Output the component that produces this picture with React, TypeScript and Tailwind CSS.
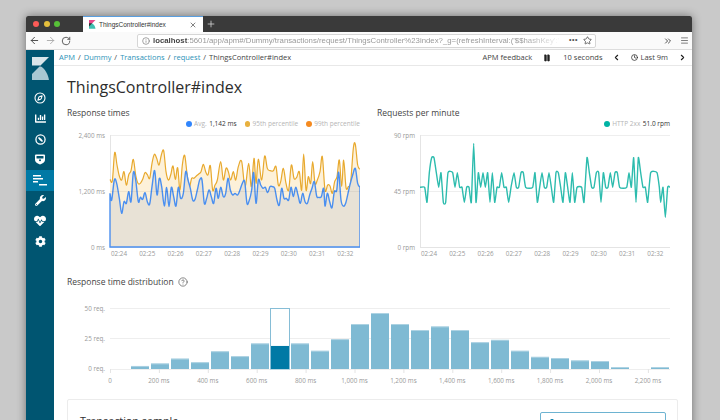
import {
  ArrowLeft,
  ArrowRight,
  ChevronLeft,
  ChevronRight,
  ChevronsRight,
  Clock,
  Compass,
  HelpCircle,
  Info,
  Menu,
  Pause,
  Plus,
  RotateCw,
  Star,
  X,
} from "lucide-react";
import { FaChartBar, FaCog, FaHeartbeat, FaWrench } from "react-icons/fa";

// chart points were read off the 3x zoom, so x 150..900 and y 105..441 is the plot
const p95: [number, number][] = [
  [150, 238], [157, 242], [164, 158], [171, 195], [178, 228], [185, 240], [192, 215], [199, 255], [206, 225],
  [213, 212], [220, 178], [227, 225], [234, 250], [241, 250], [248, 238], [255, 218], [262, 224], [269, 235],
  [276, 190], [283, 163], [290, 175], [297, 195], [304, 165], [311, 152], [318, 215], [325, 240], [332, 225],
  [339, 198], [346, 238], [353, 203], [360, 270], [367, 195], [374, 166], [381, 220], [388, 260], [395, 235],
  [402, 235], [409, 228], [416, 222], [423, 215], [430, 193], [437, 215], [444, 225], [451, 197], [458, 270],
  [465, 255], [472, 240], [482, 185], [490, 240], [498, 205], [505, 215], [512, 240], [520, 215], [527, 240],
  [535, 200], [545, 184], [555, 260], [566, 190], [574, 260], [582, 175], [588, 250], [595, 178], [605, 240],
  [614, 168], [622, 205], [630, 212], [640, 212], [648, 200], [655, 255], [662, 245], [670, 205], [678, 250],
  [686, 270], [694, 195], [702, 235], [710, 232], [718, 215], [725, 270], [731, 162], [738, 270], [745, 230],
  [752, 250], [758, 185], [765, 250], [772, 240], [780, 215], [787, 170], [795, 270], [803, 255], [810, 258],
  [817, 280], [824, 245], [831, 230], [838, 180], [845, 260], [851, 180], [858, 262], [865, 260], [872, 245],
  [880, 145], [886, 133], [893, 195], [900, 208],
];

const avg: [number, number][] = [
  [150, 280], [155, 300], [163, 240], [170, 250], [178, 295], [185, 340], [192, 305], [199, 310], [206, 275],
  [213, 305], [220, 218], [227, 240], [235, 305], [241, 292], [248, 298], [255, 278], [262, 305], [269, 312],
  [276, 260], [284, 212], [291, 285], [298, 235], [305, 260], [313, 318], [320, 262], [327, 320], [334, 262],
  [341, 290], [348, 318], [355, 262], [362, 295], [370, 280], [377, 215], [384, 240], [391, 265], [398, 300],
  [405, 298], [412, 270], [419, 240], [426, 240], [433, 310], [440, 295], [447, 270], [454, 290], [461, 310],
  [468, 265], [475, 295], [482, 262], [490, 290], [497, 280], [504, 235], [511, 270], [518, 285], [525, 280],
  [533, 285], [540, 270], [547, 250], [554, 245], [561, 310], [568, 300], [575, 270], [581, 218], [588, 310],
  [595, 240], [602, 255], [609, 265], [616, 262], [623, 278], [630, 260], [637, 260], [644, 265], [651, 300],
  [658, 315], [665, 265], [672, 295], [679, 295], [686, 300], [693, 262], [700, 290], [707, 262], [714, 285],
  [721, 310], [728, 280], [735, 305], [742, 310], [749, 285], [756, 265], [763, 245], [770, 288], [777, 292],
  [784, 290], [791, 265], [795, 318], [802, 280], [809, 305], [816, 323], [823, 275], [830, 272], [836, 217],
  [843, 300], [850, 318], [857, 310], [864, 280], [871, 250], [878, 225], [886, 205], [893, 250], [900, 262],
];

const rpm: [number, number][] = [
  [150, 262], [164, 262], [171, 307], [178, 218], [185, 173], [192, 173], [199, 218], [206, 262], [213, 218],
  [220, 307], [227, 307], [234, 218], [248, 218], [255, 262], [262, 218], [269, 262], [276, 262], [283, 307],
  [290, 262], [297, 262], [304, 307], [311, 130], [318, 307], [325, 218], [332, 262], [339, 218], [346, 262],
  [353, 218], [360, 307], [367, 218], [374, 307], [381, 262], [388, 262], [395, 218], [402, 262], [409, 262],
  [416, 307], [423, 262], [432, 218], [439, 262], [446, 262], [453, 218], [460, 218], [467, 262], [488, 262],
  [495, 218], [502, 307], [509, 262], [516, 218], [523, 262], [530, 262], [537, 218], [544, 262], [551, 307],
  [558, 218], [565, 218], [572, 262], [579, 307], [586, 218], [593, 262], [600, 307], [607, 218], [614, 307],
  [621, 262], [635, 262], [642, 307], [651, 173], [658, 218], [665, 262], [672, 262], [679, 218], [686, 218],
  [693, 307], [700, 218], [707, 262], [714, 262], [721, 218], [728, 262], [735, 218], [742, 218], [749, 262],
  [770, 262], [777, 218], [784, 262], [791, 173], [798, 307], [805, 173], [812, 218], [819, 262], [826, 262],
  [833, 307], [842, 218], [861, 218], [868, 262], [872, 307], [879, 262], [886, 352], [893, 262], [900, 262],
];

const histogram = [
  2.5, 4.5, 8.5, 5.5, 14.5, 10.5, 21, 19, 21, 15, 24.5, 37, 46, 37, 32, 35, 32, 22, 24, 15, 10, 9, 7, 6.5, 1.5, 0, 1.5,
];

const minutes = ["02:24", "02:25", "02:26", "02:27", "02:28", "02:29", "02:30", "02:31", "02:32"];
const msTicks = ["0", "200 ms", "400 ms", "600 ms", "800 ms", "1,000 ms", "1,200 ms", "1,400 ms", "1,600 ms", "1,800 ms", "2,000 ms", "2,200 ms"];

const FONT = "'Open Sans', sans-serif";

function toPlot(points: [number, number][]): [number, number][] {
  return points.map(([x, y]) => [43 + (x - 150) / 3, 5 + (y - 105) / 3]);
}

function smooth(points: [number, number][], t = 0.17) {
  let d = `M${points[0][0]},${points[0][1]}`;
  for (let i = 0; i < points.length - 1; i++) {
    const a = points[Math.max(i - 1, 0)];
    const b = points[i];
    const c = points[i + 1];
    const e = points[Math.min(i + 2, points.length - 1)];
    const c1 = [b[0] + (c[0] - a[0]) * t, b[1] + (c[1] - a[1]) * t];
    const c2 = [c[0] - (e[0] - b[0]) * t, c[1] - (e[1] - b[1]) * t];
    d += `C${c1[0].toFixed(2)},${c1[1].toFixed(2)} ${c2[0].toFixed(2)},${c2[1].toFixed(2)} ${c[0].toFixed(2)},${c[1].toFixed(2)}`;
  }
  return d;
}

function TimeChart({ labels, children }: { labels: string[]; children: React.ReactNode }) {
  return (
    <svg width="293" height="130" className="mt-[1.5px] block" fontFamily={FONT}>
      <line x1="43" x2="293" y1="5.5" y2="5.5" stroke="#eeeeee" />
      <line x1="43" x2="293" y1="61.5" y2="61.5" stroke="#eeeeee" />
      <line x1="43.5" x2="43.5" y1="5" y2="117" stroke="#e4e4e4" />
      <line x1="43" x2="293" y1="117.5" y2="117.5" stroke="#e4e4e4" />
      {children}
      {labels.map((label, i) => (
        <text key={label} x="38" y={7.5 + i * 56} textAnchor="end" fontSize="6.3" fill="#999999">
          {label}
        </text>
      ))}
      {minutes.map((m, i) => (
        <text key={m} x={52 + i * 28.3} y="126" textAnchor="middle" fontSize="6.3" fill="#999999">
          {m}
        </text>
      ))}
    </svg>
  );
}

function ResponseTimes() {
  const top = toPlot(p95);
  const low = toPlot(avg);
  const close = "L293,117 L43,117 Z";
  return (
    <TimeChart labels={["2,400 ms", "1,200 ms", "0 ms"]}>
      <path d={smooth(top) + close} fill="#fdf1d9" />
      <path d={smooth(top)} fill="none" stroke="#e8a92e" strokeWidth="1.2" />
      <path d={smooth(low) + close} fill="#e8e2d6" stroke="#4a8ff0" strokeWidth="1.4" />
      <line x1="43" x2="293" y1="61.5" y2="61.5" stroke="#000000" strokeOpacity="0.05" />
    </TimeChart>
  );
}

function RequestsPerMinute() {
  return (
    <TimeChart labels={["90 rpm", "45 rpm", "0 rpm"]}>
      <path d={smooth(toPlot(rpm), 0.08)} fill="none" stroke="#2dbcae" strokeWidth="1.4" />
    </TimeChart>
  );
}

function Distribution() {
  const base = 64;
  const perReq = 1.213;
  return (
    <svg width="611" height="94" className="block" fontFamily={FONT}>
      <line x1="43" x2="603" y1="3.5" y2="3.5" stroke="#eeeeee" />
      <line x1="43" x2="603" y1="33.5" y2="33.5" stroke="#eeeeee" />
      <line x1="43" x2="603" y1={base + 0.5} y2={base + 0.5} stroke="#eeeeee" />
      {["50 req.", "25 req.", "0 req."].map((label, i) => (
        <text key={label} x="38" y={5.5 + i * 30.2} textAnchor="end" fontSize="6.3" fill="#999999">
          {label}
        </text>
      ))}
      {histogram.map((value, i) => {
        const x = 63 + i * 20;
        const h = value * perReq;
        if (i === 7) {
          return (
            <g key={i}>
              <rect x={x + 0.5} y="3.5" width="19" height={base - 3.5} fill="#ffffff" stroke="#86bdd6" />
              <rect x={x + 1} y={base - h} width="18" height={h} fill="#0079a5" />
            </g>
          );
        }
        return (
          <g key={i}>
            <rect x={x + 1} y={base - h} width="18" height={h} fill="#7fbad3" />
            <rect x={x + 1} y={base - h} width="18" height={Math.min(h, 0.8)} fill="#b5d6e5" />
          </g>
        );
      })}
      {msTicks.map((tick, i) => (
        <g key={tick}>
          <line x1={43.5 + i * 48.9} x2={43.5 + i * 48.9} y1={base} y2={base + 4} stroke="#e4e4e4" />
          <text x={43 + i * 48.9} y={base + 14} textAnchor="middle" fontSize="6.3" fill="#999999">
            {tick}
          </text>
        </g>
      ))}
    </svg>
  );
}

function LegendDot({ color, label, value }: { color: string; label: string; value?: string }) {
  return (
    <span className="flex items-center gap-[2.5px]">
      <span className="size-[5.5px] rounded-full" style={{ backgroundColor: color }} />
      <span className="text-[#b5b5b5]">{label}</span>
      {value && <span className="text-[#333333]">{value}</span>}
    </span>
  );
}

function KibanaLogo({ size, dark }: { size: number; dark?: boolean }) {
  return (
    <svg width={size} height={size * 1.35} viewBox="0 0 17 23" className="shrink-0">
      <path d="M0 0H17L0 17Z" fill={dark ? "#e8488b" : "#d9e5ea"} />
      <path d="M0 10L9 9.5C13 12 16 17 17 23H0Z" fill={dark ? "#3ebeb0" : "#a9c7d2"} />
      <path d="M0 8.5L8.5 8.5 0 17Z" fill={dark ? "#353535" : "#005571"} />
    </svg>
  );
}

function DashboardIcon() {
  return (
    <svg width="11" height="11" viewBox="0 0 12 12" fill="none" stroke="currentColor" strokeWidth="1.4">
      <circle cx="6" cy="6" r="5" />
      <path d="M3.8 3.8L6 6M6 6L8.2 8.2" strokeWidth="1.8" />
      <circle cx="6" cy="6" r="1.2" fill="currentColor" stroke="none" />
    </svg>
  );
}

function BadgeIcon() {
  return (
    <svg width="12" height="11" viewBox="0 0 12 11" fill="#ffffff">
      <path d="M1 1.5Q1 .5 2 .5H10Q11 .5 11 1.5V6Q11 8.5 6 10.5 1 8.5 1 6Z" />
      <rect x="2.5" y="2" width="7" height="2.5" rx="0.5" fill="#005571" />
      <circle cx="6" cy="6.2" r="1" fill="#005571" />
    </svg>
  );
}

function ApmIcon() {
  return (
    <svg width="14" height="12" viewBox="0 0 14 12" fill="#ffffff">
      <rect x="0" y="1" width="8" height="1.5" />
      <rect x="0" y="4" width="10" height="1.5" />
      <rect x="0" y="7" width="5" height="1.5" />
      <rect x="6" y="10" width="8" height="1.5" />
    </svg>
  );
}

function Sidebar() {
  const rowClass = "flex h-[20.5px] items-center justify-center";
  return (
    <aside className="flex h-full w-[28px] shrink-0 flex-col items-stretch bg-[#005571] text-white">
      <div className="flex h-[38px] justify-center pt-[7px]">
        <KibanaLogo size={17} />
      </div>
      <div className={rowClass}>
        <Compass size={12} strokeWidth={2.2} />
      </div>
      <div className={rowClass}>
        <FaChartBar size={11} />
      </div>
      <div className={rowClass}>
        <DashboardIcon />
      </div>
      <div className={rowClass}>
        <BadgeIcon />
      </div>
      <div className={`${rowClass} bg-[#0079a5]`}>
        <ApmIcon />
      </div>
      <div className={rowClass}>
        <FaWrench size={11} />
      </div>
      <div className={rowClass}>
        <FaHeartbeat size={12} />
      </div>
      <div className={rowClass}>
        <FaCog size={11} />
      </div>
    </aside>
  );
}

function BrowserChrome() {
  return (
    <div className="font-['Liberation_Sans',sans-serif]">
      <div className="flex h-[16px] items-stretch bg-[#3a3a3a]">
        <div className="flex w-[57px] items-center gap-[4.5px] pl-[7px]">
          <span className="size-[6px] rounded-full bg-[#fc5b57]" />
          <span className="size-[6px] rounded-full bg-[#e5bf3c]" />
          <span className="size-[6px] rounded-full bg-[#57c038]" />
        </div>
        <div className="flex w-[120px] items-center border-t border-[#5a9fe0] bg-white pl-[6px] pr-[6px] text-[6.5px] text-[#333333]">
          <KibanaLogo size={6.5} dark />
          <span className="ml-[3.5px] flex-1">ThingsController#index</span>
          <X size={8} color="#444444" />
        </div>
        <div className="flex items-center pl-[3px]">
          <Plus size={10} color="#d0d0d0" />
        </div>
      </div>
      <div className="flex h-[18px] items-center border-b border-[#dddddd] bg-[#fafafa] pl-[3px] pr-[3px]">
        <div className="flex w-[108px] items-center gap-[5px] text-[#444444]">
          <ArrowLeft size={11} />
          <ArrowRight size={11} color="#aaaaaa" />
          <RotateCw size={10} />
        </div>
        <div className="flex h-[14px] w-[459px] items-center rounded-[2px] border border-[#d6d6d6] bg-white pl-[4px] pr-[3px] text-[7.8px] text-[#9a9a9a]">
          <Info size={8} color="#777777" />
          <div className="ml-[3px] w-[410px] overflow-hidden whitespace-nowrap [mask-image:linear-gradient(to_right,black_90%,transparent)]">
            <span className="font-bold text-[#444444]">localhost</span>
            :5601/app/apm#/Dummy/transactions/request/ThingsController%23index?_g=(refreshInterval:('$$hashKey':'
          </div>
          <span className="ml-[6px] text-[7px] font-bold tracking-[0.5px] text-[#555555]">•••</span>
          <Star size={9} color="#444444" className="ml-auto" />
        </div>
        <ChevronsRight size={10} color="#333333" className="ml-auto" />
        <Menu size={9} color="#555555" className="ml-[7px]" />
      </div>
    </div>
  );
}

function Breadcrumbs() {
  const crumbs = ["APM", "Dummy", "Transactions", "request"];
  return (
    <div className="flex h-[16px] shrink-0 items-center border-b border-[#e8e8e8] pl-[5px] pr-[5px] text-[7.5px] text-[#444444]">
      {crumbs.map((crumb) => (
        <span key={crumb} className="mr-[3px]">
          <span className="text-[#2d93b8]">{crumb}</span> <span className="ml-[1px]">/</span>
        </span>
      ))}
      <span>ThingsController#index</span>
      <span className="ml-auto">APM feedback</span>
      <Pause size={8} fill="#222222" color="#222222" className="ml-[11px]" />
      <span className="ml-[12px]">10 seconds</span>
      <ChevronLeft size={9} strokeWidth={3} color="#222222" className="ml-[10px]" />
      <Clock size={7} strokeWidth={2.5} color="#222222" className="ml-[10px]" />
      <span className="ml-[2px]">Last 9m</span>
      <ChevronRight size={9} strokeWidth={3} color="#222222" className="ml-[10px]" />
    </div>
  );
}

export default function App() {
  return (
    <div className="h-[420px] w-[720px] overflow-hidden bg-[#c9c9c9] pl-[26px] pt-[16px]" style={{ fontFamily: FONT }}>
      <div className="flex h-[420px] w-[666px] flex-col overflow-hidden rounded-t-[2px] bg-white shadow-[0_0_10px_rgba(0,0,0,0.45)]">
        <BrowserChrome />
        <div className="flex min-h-0 flex-1">
          <Sidebar />
          <div className="flex min-w-0 flex-1 flex-col">
            <Breadcrumbs />
            <main className="px-[13px] pt-[8px]">
              <h1 className="text-[16px] leading-[26px] text-[#2d2d2d]">ThingsController#index</h1>
              <div className="mt-[5.5px] grid grid-cols-[293px_293px] gap-x-[17px]">
                <section>
                  <h2 className="text-[8.5px] leading-[13px] text-[#444444]">Response times</h2>
                  <div className="mt-[1px] flex h-[9px] items-center justify-end gap-[8px] text-[6.5px]">
                    <LegendDot color="#3185fc" label="Avg." value="1,142 ms" />
                    <LegendDot color="#e8b13f" label="95th percentile" />
                    <LegendDot color="#f58a1f" label="99th percentile" />
                  </div>
                  <ResponseTimes />
                </section>
                <section>
                  <h2 className="text-[8.5px] leading-[13px] text-[#444444]">Requests per minute</h2>
                  <div className="mt-[1px] flex h-[9px] items-center justify-end text-[6.5px]">
                    <LegendDot color="#00b3a4" label="HTTP 2xx" value="51.0 rpm" />
                  </div>
                  <RequestsPerMinute />
                </section>
              </div>
              <div className="mt-[15.5px] flex h-[13px] items-center gap-[4px] text-[8.5px] text-[#444444]">
                Response time distribution
                <HelpCircle size={10} strokeWidth={1.5} />
              </div>
              <div className="mt-[16.5px]">
                <Distribution />
              </div>
              <div className="flex h-[60px] w-[611px] items-start justify-between rounded-[2px] border border-[#ececec] pl-[12px] pr-[11px] pt-[12px]">
                <h3 className="text-[10.8px] leading-[18px] text-[#333333]">Transaction sample</h3>
                <div className="h-[24px] w-[126px] rounded-[2px] border border-[#6db3d1] pl-[9px] pt-[6px]">
                  <div className="size-[4px] rounded-full bg-[#0079a5]" />
                </div>
              </div>
            </main>
          </div>
        </div>
      </div>
    </div>
  );
}
